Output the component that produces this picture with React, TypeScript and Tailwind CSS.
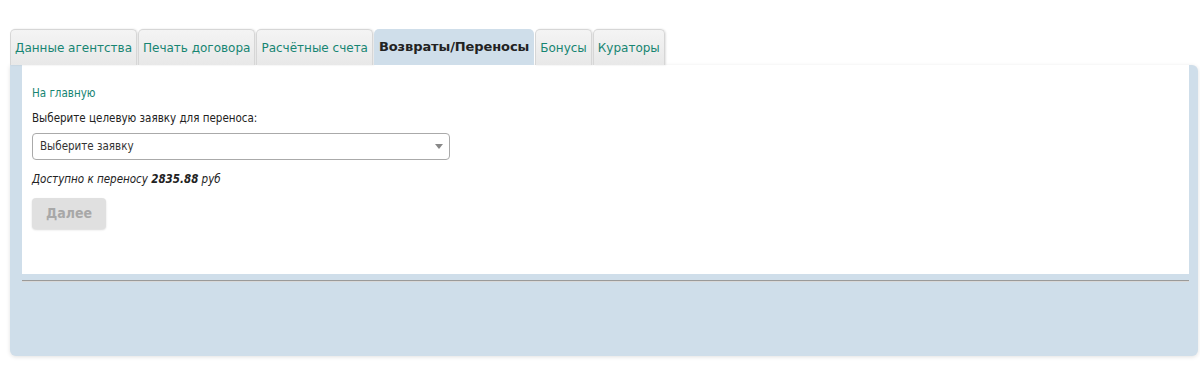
import React from "react";

const tabs = [
  "Данные агентства",
  "Печать договора",
  "Расчётные счета",
  "Возвраты/Переносы",
  "Бонусы",
  "Кураторы",
];

export default function App() {
  return (
    <div
      className="w-[1200px] h-[377px] bg-white pt-[29px] pl-[10px] pr-[2px]"
      style={{ fontFamily: "'DejaVu Sans', Tahoma, sans-serif" }}
    >
      <div className="flex gap-[1px] h-[36px]">
        {tabs.map((t, i) =>
          i === 3 ? (
            <div
              key={t}
              className="h-full px-[5px] flex items-center rounded-t-[5px] bg-[#cfdeea] text-[#222] font-bold text-[13px] tracking-[-0.1px]"
            >
              {t}
            </div>
          ) : (
            <div
              key={t}
              className="h-full px-[4px] flex items-center rounded-t-[5px] border border-b-0 border-[#d6d6d6] bg-gradient-to-b from-[#f4f4f4] to-[#e8e8e8] text-[#178572] text-[12px] shadow-[1px_0_2px_rgba(0,0,0,0.12)]"
            >
              {t}
            </div>
          )
        )}
      </div>
      <div className="bg-[#cfdeea] rounded-b-[6px] rounded-tr-[6px] pl-[12px] pr-[9px] pb-[74px] shadow-[0_1px_4px_rgba(0,0,0,0.12)]">
        <div
          className="bg-white h-[209px] pl-[10px] pt-[20px] text-[11.5px] text-[#222] font-stretch-condensed"
          style={{ fontFamily: "'DejaVu Sans Condensed', 'DejaVu Sans', Tahoma, sans-serif" }}
        >
          <div className="text-[#178572] leading-[16px]">На главную</div>
          <div className="mt-[9px] leading-[16px]">Выберите целевую заявку для переноса:</div>
          <div className="mt-[7px] w-[418px] h-[27px] border border-[#aaa] rounded-[4px] flex items-center justify-between pl-[7px] pr-[6px] text-[#333]">
            <span>Выберите заявку</span>
            <svg width="8" height="5" viewBox="0 0 8 5">
              <path d="M0 0 H8 L4 5 Z" fill="#888" />
            </svg>
          </div>
          <div className="mt-[11px] italic leading-[16px] text-[#222]">
            Доступно к переносу <b>2835.88</b> руб
          </div>
          <div className="mt-[11px] w-[74px] h-[31px] rounded-[4px] bg-[#e0e0e0] shadow-[0_1px_2px_rgba(0,0,0,0.15)] flex items-center justify-center text-[14px] font-bold text-[#a8a8a8]">
            Далее
          </div>
        </div>
        <div className="mt-[6px] h-[2px] border-t border-[#9a9a9a] border-b border-b-[#d8d8d8]" />
      </div>
    </div>
  );
}
